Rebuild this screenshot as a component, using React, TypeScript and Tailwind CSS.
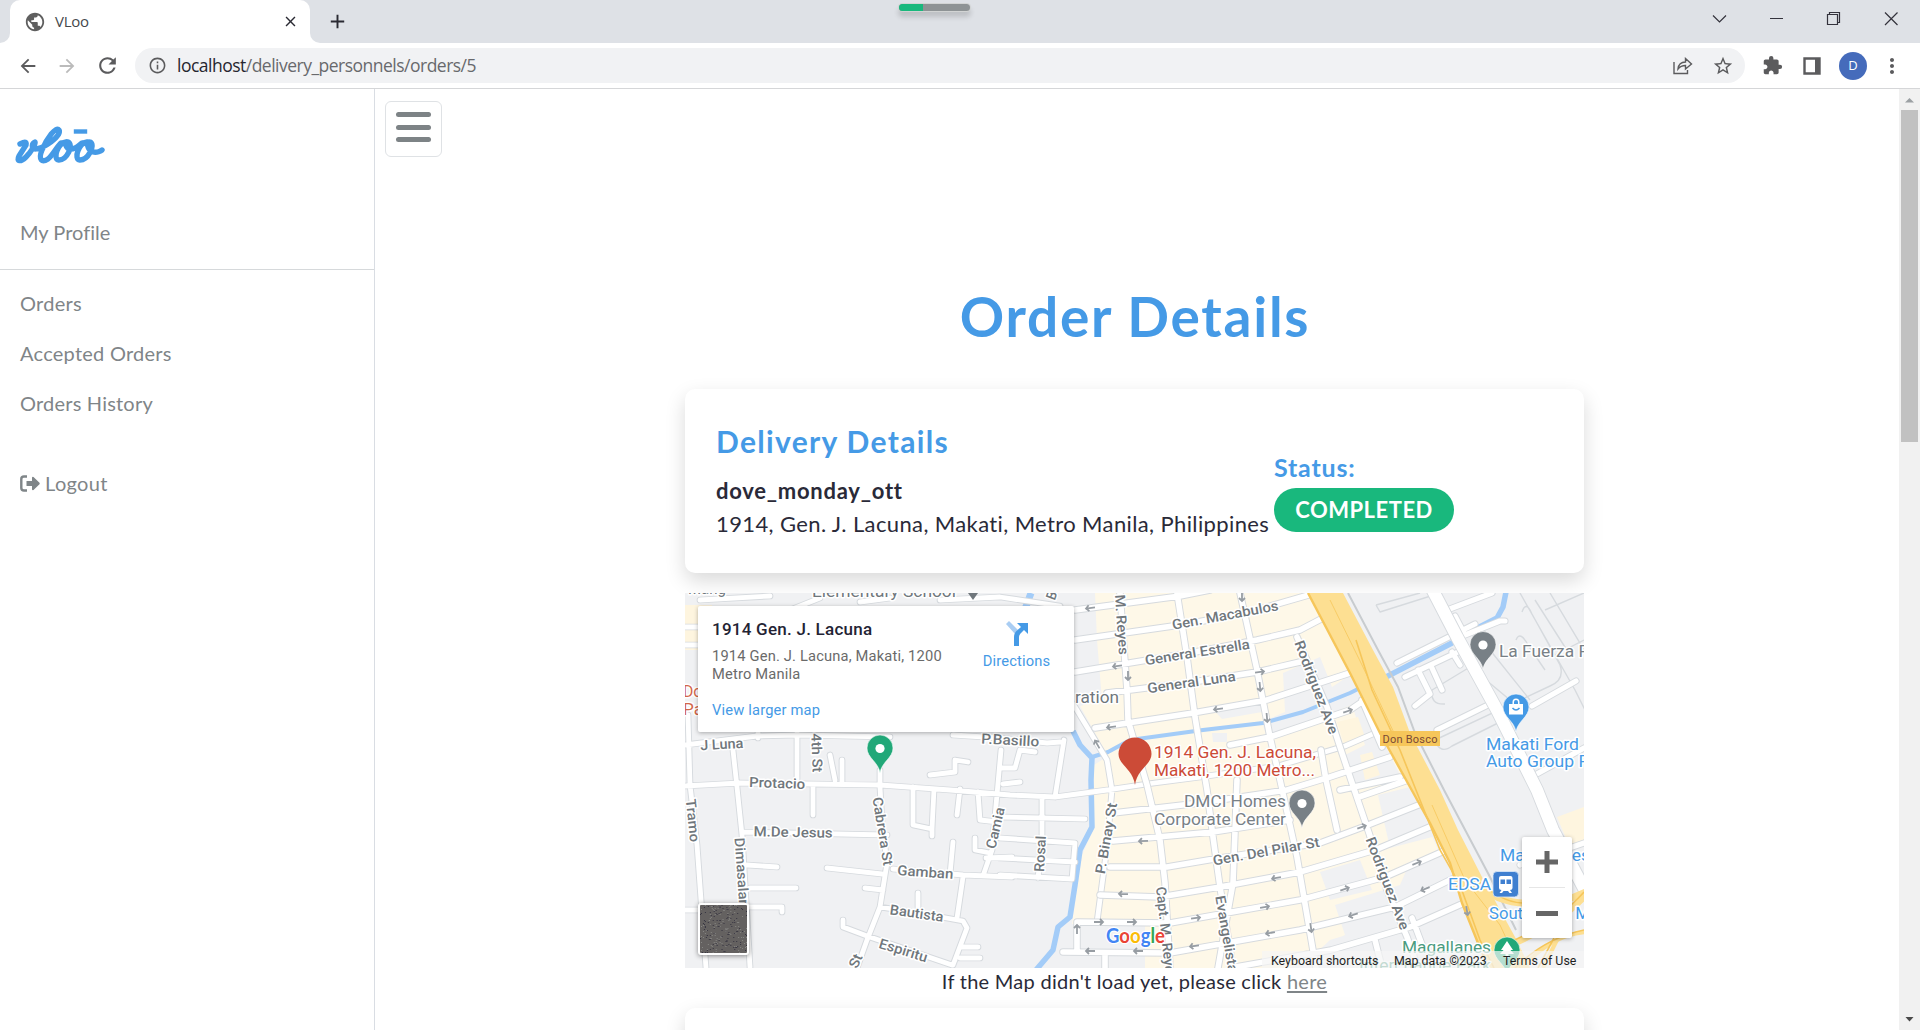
import type { ReactNode } from "react";
import {
  MdPublic, MdClose, MdAdd, MdArrowBack, MdArrowForward, MdRefresh, MdInfoOutline,
  MdStarBorder, MdExtension, MdMoreVert,
} from "react-icons/md";

const GRAY_ROADS = [
  "M685 786L740 783L810 784L880 785L950 790L1010 795L1055 797L1107 790L1147 784L1200 777L1278 766L1345 746L1382 730",
  "M685 745L757 736L800 735L890 737", "M953 735L1000 738L1047 743L1060 742", "M797 733V784",
  "M688 715L690 785L697 845L706 968", "M732 741L737 787L742 835L750 967", "M758 725V738",
  "M743 832L887 835", "M813 787V815", "M747 865L777 867", "M750 888H796", "M750 907H782V912", "M685 910H702",
  "M880 770V787L882 823L887 863L880 907L867 940L857 968", "M827 868L882 874", "M893 869L963 875L1012 877",
  "M880 907L930 915L963 921L967 928L953 965", "M963 877L957 918", "M843 920V927L867 936L952 965",
  "M865 888L883 890", "M913 787V825L932 829L934 789", "M932 829V836", "M960 789L957 815", "M978 792L980 820L998 822",
  "M1001 750L992 850L984 873", "M953 842L950 874", "M975 838V850L990 853", "M960 947H978", "M960 958H980", "M918 893V907",
  "M986 858L1012 857", "M1000 817L1085 819", "M1042 797V840L1038 878", "M1000 838L1075 843L1072 879L1000 875",
  "M1000 858L1075 862", "M1064 740L1055 797", "M830 755L835 780M842 760V782", "M930 775L955 772V760L968 762",
  "M1000 768L1015 768L1020 750L1035 752M1003 784L1020 782", "M1062 690L1075 707L1107 760L1112 790L1107 847L1097 922",
  "M700 600L770 596M790 610L820 598M860 602L890 598M940 600L1000 597L1060 606M685 627H710M685 645H710",
];
const GRID_ROADS = [
  "M1120 593L1127 690L1128 720L1147 785L1160 840L1165 883L1170 968", "M1177 593L1187 657L1195 717L1207 790L1213 837L1220 887L1233 968",
  "M1240 593L1257 670L1270 737L1280 780L1297 857L1316 968", "M1297 637L1327 707L1340 747L1351 780L1369 833L1387 890L1407 937L1418 968",
  "M1237 780L1233 883L1218 968", "M1075 610L1180 596L1210 590", "M1075 640L1187 624L1250 612L1312 594", "M1075 672L1190 653L1257 640L1300 630L1323 618",
  "M1107 693L1193 682L1257 672L1300 662", "M1095 728L1193 713L1267 700L1350 673", "M1230 745L1270 737L1350 710L1366 699",
  "M1330 777L1390 757", "M1113 813L1200 803L1287 790L1330 777", "M1113 841L1213 832L1290 820", "M1359 797L1408 780",
  "M1110 867L1167 867L1220 858L1320 843L1363 827L1421 804", "M1100 895L1160 897L1220 887L1300 872L1375 850L1432 826",
  "M1077 950V922L1170 923L1300 900L1385 877L1444 851", "M1063 952L1170 953L1300 930L1395 907L1452 879", "M1230 968L1331 950L1410 927L1464 903",
  "M1326 780L1337 830", "M1321 750L1326 780M1340 790L1400 777", "M1105 953V968", "M1362 700L1382 747", "M1375 940L1382 968M1412 918L1424 950",
];
const EAST_ROADS = [
  "M1397 663L1475 624", "M1405 677L1460 651", "M1418 670L1430 694L1415 706", "M1432 668L1442 690", "M1455 616L1465 635L1500 621H1505",
  "M1437 730L1490 704M1532 706L1576 681", "M1447 610L1492 593M1535 775L1584 748", "M1452 652L1460 665", "M1435 710M1520 865L1584 843",
];
const EAST_LINES = [
  "M1376 605L1420 593M1376 605L1380 612L1440 593", "M1520 593L1575 690L1590 720M1550 593L1590 660M1535 600L1570 655",
  "M1522 612Q1526 600 1532 614L1560 665Q1565 680 1550 686L1435 740Q1440 755 1452 746L1520 712", "M1516 640Q1520 630 1528 645L1545 670",
  "M1470 667L1432 690Q1430 705 1445 704M1480 675L1510 700M1490 650L1530 700", "M1555 655L1584 640M1545 610L1584 593",
];
const RIVERS = [
  "M1073 731L1080 745L1092 758L1091 780L1092 827L1080 850L1075 885L1070 917L1058 927L1053 950L1036 970",
  "M1092 757L1108 752L1130 740L1203 730L1263 723L1303 712L1350 693L1362 687", "M1386 677L1452 643L1462 636L1497 618L1503 607L1506 592",
  "M1031 593L1024 612",
];

const Arrow = ({ x, y, r = 0 }: { x: number; y: number; r?: number }) => (
  <path d="M-5 0H4M1 -3L4 0L1 3" transform={`translate(${x} ${y}) rotate(${r})`} stroke="#979da3" strokeWidth="1.8" fill="none" />
);
const ARROWS: [number, number, number][] = [
  [1090, 608, 172], [1117, 666, 172], [1128, 676, 90], [1218, 709, 172], [1111, 727, 172], [1097, 744, 240], [1242, 597, 90],
  [1260, 672, -8], [1260, 687, 85], [1267, 718, 85], [1348, 711, -18], [1143, 841, 178], [1123, 894, 182], [1276, 878, 170],
  [1099, 922, 0], [1132, 922, 0], [1196, 918, -8], [1265, 907, -10], [1077, 929, -90], [1090, 951, 180], [1138, 951, 180],
  [1194, 946, 172], [1270, 933, 170], [1311, 928, 82], [1362, 827, -20], [1417, 863, -22], [1345, 889, -20], [1425, 889, 158],
  [1353, 915, 162], [1467, 911, 80],
];

/* x, y is the middle of the label's baseline; w is the drawn length. */
type LabelSpec = [text: string, x: number, y: number, angle: number, w: number, size?: number];
const STREETS: LabelSpec[] = [
  ["J Luna", 722, 749, -3, 43], ["4th St", 812, 753, 88, 39], ["P.Basillo", 1010, 745, 3, 58], ["Protacio", 777, 788, 2, 56],
  ["Tramo", 688, 821, 84, 43], ["Dimasalan", 737, 873, 86, 70], ["M.De Jesus", 793, 837, 1, 79], ["Cabrera St", 878, 832, 81, 69],
  ["Gamban", 925, 877, 4, 56], ["Bautista", 916, 918, 8, 54], ["Espiritu", 902, 955, 17, 50], ["Camia", 1000, 829, -77, 42],
  ["Rosal", 1045, 854, -87, 36], ["St", 860, 963, -65, 14], ["M. Reyes", 1117, 625, 86, 60], ["Gen. Macabulos", 1226, 620, -10.5, 108],
  ["General Estrella", 1198, 657, -9, 106], ["General Luna", 1192, 687, -8, 89], ["Rodriguez Ave", 1312, 689, 69, 99], ["P. Binay St", 1111, 839, -80, 72],
  ["Gen. Del Pilar St", 1267, 856, -10, 108], ["Capt. M. Reyes", 1161, 934, 84, 94], ["Evangelista", 1222, 935, 80, 78],
  ["Rodriguez Ave", 1383, 885, 69, 98], ["B", 1056, 597, -70, 8],
];

function Label({ spec, fill = "#70777c" }: { spec: LabelSpec; fill?: string }) {
  const [text, x, y, angle, w, size = 14] = spec;
  return (
    <text transform={`translate(${x} ${y}) rotate(${angle})`} textAnchor="middle" textLength={w} lengthAdjust="spacingAndGlyphs"
      fontSize={size} fill={fill} stroke="#fff" strokeWidth="3" strokeLinejoin="round" style={{ paintOrder: "stroke" }} fontWeight="500">
      {text}
    </text>
  );
}

function Place({ lines, x, y, w, color, anchor = "start" }: { lines: string[]; x: number; y: number; w: number[]; color: string; anchor?: "start" | "end" }) {
  return (
    <>
      {lines.map((t, i) => (
        <text key={t} x={x} y={y + i * 17.5} textAnchor={anchor} textLength={w[i]} lengthAdjust="spacingAndGlyphs" fontSize="16.5" fill={color}
          stroke="#fff" strokeWidth="3" strokeLinejoin="round" style={{ paintOrder: "stroke" }}>{t}</text>
      ))}
    </>
  );
}

const Pin = ({ x, y, color, children }: { x: number; y: number; color: string; children?: ReactNode }) => (
  <g transform={`translate(${x} ${y})`}>
    <path d="M0 38C-1.500 27 -13 23 -13 13A13 13 0 0 1 13 13C13 23 1.500 27 0 38Z" fill={color} stroke="#fff" strokeOpacity=".6" strokeWidth="1" />
    {children ?? <circle cy="13.5" r="4.6" fill="#fff" />}
  </g>
);

function Roads({ d, w }: { d: string[]; w: number }) {
  const path = d.join("");
  return (
    <g fill="none" strokeLinecap="round" strokeLinejoin="round">
      <path d={path} stroke="#d6dade" strokeWidth={w + 1.9} />
      <path d={path} stroke="#fff" strokeWidth={w} />
    </g>
  );
}

function StreetMap() {
  return (
    <svg viewBox="685 593 899 375" className="block h-[375px] w-[899px]" fontFamily="Roboto, sans-serif">
      <rect x="685" y="593" width="899" height="375" fill="#f0f1f3" />
      <path d="M1095 593H1312L1350 672L1380 733L1410 787L1462 903L1395 920L1330 940L1300 968H1145V924H1072L1082 855L1094 828V765L1108 756L1080 706L1102 700L1097 640Z" fill="#fef8e8" />
      <path d="M685 605H712V650H685Z" fill="#fef5df" />
      <g fill="#f0f1f3">
        <path d="M1283 673L1320 657L1332 687L1350 675L1362 700L1290 732L1267 738L1262 722L1285 712Z" />
        <path d="M1213 709L1262 702V712L1222 719ZM1212 733H1227V742H1213Z" />
        <path d="M1352 705L1366 700L1390 755L1400 775L1355 790L1345 755L1365 745Z" />
        <path d="M1378 795L1418 785L1440 835L1390 848Z" />
        <path d="M1320 872L1360 860L1372 890L1330 900ZM1410 862L1450 850L1475 920L1400 935L1340 968H1290L1345 935L1335 905L1400 885Z" />
      </g>
      <path d="M1337 722L1358 717L1366 740L1345 747ZM1360 755L1372 752L1380 775L1365 780ZM1557 817L1584 807V845L1570 848Z" fill="#fef5df" />
      <g fill="none" stroke="#a3ccf8" strokeLinejoin="round">
        <path d={RIVERS[0]} strokeWidth="5.5" /><path d={RIVERS[1]} strokeWidth="4" />
        <path d={RIVERS[2]} strokeWidth="5.5" /><path d={RIVERS[3]} strokeWidth="7" />
      </g>
      <path d={EAST_LINES.join("")} fill="none" stroke="#d6dade" strokeWidth="1.4" strokeLinejoin="round" />
      <Roads d={GRAY_ROADS} w={4.8} />
      <Roads d={GRID_ROADS} w={5.6} />
      <Roads d={EAST_ROADS} w={5.2} />
      <Roads d={["M1430 585L1457 637L1497 710L1537 790L1553 830L1588 896"]} w={12} />
      <path d="M1348 593L1378 650L1398 687L1415 733L1444 790L1490 877L1516 930" fill="none" stroke="#c8cccf" strokeWidth="2" />
      <path d="M1308 593L1350 673L1380 733L1410 787L1430 823L1450 863L1462 903L1478 943L1489 968H1530L1515 937L1482 877L1458 830L1440 790L1410 733L1393 687L1373 650L1343 593Z" fill="#fddf92" />
      <g fill="none" stroke="#fddf92" strokeWidth="7">
        <path d="M1470 880Q1500 905 1530 903Q1560 905 1586 892" /><path d="M1500 950Q1560 925 1586 895" strokeWidth="6" /><path d="M1520 970Q1550 935 1586 932" strokeWidth="4" />
        <path d="M1543 968L1558 938" strokeWidth="4" />
      </g>
      <g fill="none" stroke="#f6c65a" strokeWidth="1.6">
        <path d="M1308 593L1350 673L1380 733L1410 787L1430 823L1450 863L1462 903L1478 943L1489 968" strokeWidth="2.4" />
        <path d="M1356 640L1372 690L1400 750L1420 800L1440 850L1460 885L1480 940L1494 968" />
        <path d="M1330 600L1362 665L1395 735M1432 805L1465 880L1500 925L1520 968" strokeWidth=".8" />
        <path d="M1475 878Q1500 902 1522 903M1498 947Q1555 925 1584 892M1515 968Q1545 938 1584 930M1538 968L1554 938" />
      </g>
      {ARROWS.map(([x, y, r]) => <Arrow key={`${x}-${y}`} x={x} y={y} r={r} />)}
      {STREETS.map((s) => <Label key={s[0] + s[1]} spec={s} />)}
      <Place lines={["Elementary School"]} x={812} y={597} w={[144]} color="#70777c" />
      <Place lines={["Mang"]} x={688} y={594} w={[38]} color="#70777c" />
      <path d="M968 593H978L973 600Z" fill="#70777c" />
      <Place lines={["Don", "Pa"]} x={683} y={697} w={[28, 20]} color="#d2664a" />
      <Place lines={["ration"]} x={1075} y={703} w={[44]} color="#70777c" />
      <Place lines={["DMCI Homes", "Corporate Center"]} x={1286} y={807} w={[102, 132]} color="#788086" anchor="end" />
      <Place lines={["La Fuerza Plaza"]} x={1499} y={657} w={[122]} color="#788086" />
      <Place lines={["Makati Ford", "Auto Group PH"]} x={1486} y={749.5} w={[93, 116]} color="#459ae6" />
      <Place lines={["1914 Gen. J. Lacuna,", "Makati, 1200 Metro..."]} x={1154} y={758} w={[162, 161]} color="#cc4b37" />
      <Pin x={880} y={735} color="#21a878" />
      <Pin x={1483} y={631.5} color="#788086" />
      <Pin x={1302} y={790} color="#788086" />
      <Pin x={1516} y={694} color="#459ae6">
        <path d="M-7 10H7V20.500H-7ZM-3.500 10V8A3.500 3.500 0 0 1 3.500 8V10H2V8A2 2 0 0 0 -2 8V10Z" fill="#fff" />
        <path d="M-3.500 14Q0 18 3.500 14" fill="none" stroke="#459ae6" strokeWidth="1.500" />
      </Pin>
      <path d="M1135 785C1133 769 1118.500 765 1118.500 754A16.500 16.500 0 0 1 1151.500 754C1151.500 765 1137 769 1135 785Z" fill="#cc4b37" />
      <rect x="1380" y="731" width="60" height="15" fill="#f6c65a" />
      <text x="1382.500" y="742.500" fontSize="11" fill="#7a4a35" textLength="55">Don Bosco</text>
      <Place lines={["Magallanes"]} x={1500} y={860.500} w={[90]} color="#459ae6" />
      <Place lines={["EDSA"]} x={1448} y={889.500} w={[43]} color="#459ae6" />
      <Place lines={["South Gate Mall"]} x={1489} y={918.500} w={[118]} color="#459ae6" />
      <rect x="1493" y="871.500" width="25.500" height="25.500" rx="4" fill="#3f7fd0" stroke="#dbe8f8" strokeWidth=".8" />
      <path d="M1501 876H1510.500Q1512.500 876 1512.500 878V888Q1512.500 890 1510 890L1512 893H1509.500L1508 891H1503.500L1502 893H1499.500L1501.500 890Q1499 890 1499 888V878Q1499 876 1501 876Z" fill="#fff" />
      <path d="M1500.500 879.500H1505V884H1500.500ZM1506.500 879.500H1511V884H1506.500Z" fill="#3f7fd0" />
      <Place lines={["Magallanes", "Interchange Park"]} x={1491} y={953} w={[89, 132]} color="#4a9c80" anchor="end" />
      <Pin x={1507} y={937} color="#21a878"><path d="M0 4L6 13H3.500L7 17H1.500V21H-1.500V17H-7L-3.500 13H-6Z" fill="#fff" /></Pin>
      <g fontSize="20.500" strokeWidth="2.500" stroke="#fff" style={{ paintOrder: "stroke" }} fontWeight="700" fontFamily="Lato, sans-serif">
        <text x="1106" y="943" textLength="59" lengthAdjust="spacingAndGlyphs">
          <tspan fill="#4285f4">G</tspan><tspan fill="#ea4335">o</tspan><tspan fill="#fbbc05">o</tspan><tspan fill="#4285f4">g</tspan><tspan fill="#34a853">l</tspan><tspan fill="#ea4335">e</tspan>
        </text>
      </g>
    </svg>
  );
}

function Satellite() {
  const specks = Array.from({ length: 230 }, (_, i) => {
    const a = Math.abs(Math.sin(i * 12.9898 + 4.1) * 43758.5453);
    const b = Math.abs(Math.sin(i * 78.233 + 1.7) * 12543.1234);
    return { x: Math.floor((a % 1) * 48), y: Math.floor((b % 1) * 48), c: i % 2 ? "#898986" : "#34323f" };
  });
  return (
    <div className="absolute bottom-[13px] left-[13px] h-[52px] w-[51px] rounded-[3px] border-2 border-white bg-[#646160] shadow-[0_1px_5px_rgba(0,0,0,0.45)]">
      <svg viewBox="0 0 48 48" className="block h-12 w-[47px]" preserveAspectRatio="none">
        {specks.map((s, i) => <rect key={i} x={s.x} y={s.y} width="1" height="1" fill={s.c} />)}
      </svg>
    </div>
  );
}

function MapPanel() {
  return (
    <section className="relative mt-5 h-[375px] w-[899px] overflow-hidden font-[Roboto,sans-serif]">
      <StreetMap />
      <div className="absolute left-[13px] top-[13px] flex h-[126px] w-[376px] justify-between rounded-xs bg-white pl-[14px] shadow-[0_1px_4px_rgba(0,0,0,0.3)]">
        <div className="pt-[11px]">
          <h3 className="text-[17px] font-medium leading-6 tracking-[0.25px] text-[#232333]">1914 Gen. J. Lacuna</h3>
          <p className="mt-[6px] w-60 text-[14.700px] leading-[18px] tracking-[0.170px] text-[#6a6a6a]">1914 Gen. J. Lacuna, Makati, 1200 Metro Manila</p>
          <a className="mt-[18px] block text-[14.700px] leading-[18px] tracking-[0.170px] text-[#459ae6]">View larger map</a>
        </div>
        <div className="flex w-[115px] flex-col items-center pt-[15px]">
          <svg viewBox="0 0 26 26" className="h-[26px] w-[26px]">
            <path d="M2 3L5 0L14 9L11 13Z" fill="#a9cdf3" />
            <path d="M10 25V16Q10 12 13 9.500L17 6L13 2H24V13L20 9L16.500 12.500Q15 14 15 16V25Z" fill="#459ae6" />
          </svg>
          <span className="mt-[5px] text-[14.700px] leading-[18px] tracking-[0.150px] text-[#459ae6]">Directions</span>
        </div>
      </div>
      <Satellite />
      <div className="absolute right-3 top-[244px] flex h-[101px] w-[50px] flex-col items-center rounded-xs bg-white shadow-[0_1px_4px_rgba(0,0,0,0.3)]">
        <svg viewBox="0 0 50 101" className="h-[101px] w-[50px]">
          <path d="M14 22.500H22.500V14H27.500V22.500H36V27.500H27.500V36H22.500V27.500H14ZM14 74H36V79H14Z" fill="#666" />
          <path d="M7 50.500H43" stroke="#e6e6e6" />
        </svg>
      </div>
      <div className="absolute bottom-0 right-0 flex h-[17px] items-center bg-[#f5f5f5]/70 pt-px text-[12.400px] leading-[17px] text-[#1f1f1f]">
        <span className="w-[123px] whitespace-nowrap pl-[9px]">Keyboard shortcuts</span>
        <span className="w-[109px] whitespace-nowrap pl-[9px]">Map data ©2023</span>
        <span className="w-[90px] whitespace-nowrap pl-[9px]">Terms of Use</span>
      </div>
    </section>
  );
}

function Browser() {
  return (
    <header className="shrink-0 font-['Open_Sans',sans-serif]">
      <div className="relative flex h-[43px] bg-[#dee1e6]">
        <div className="flex w-[10px] items-end bg-white"><div className="h-full w-full rounded-br-[10px] bg-[#dee1e6]" /></div>
        <div className="flex bg-[#dee1e6]">
          <div className="flex w-[300px] items-center rounded-t-[10px] bg-white pl-[14px] pr-[11px]">
            <MdPublic className="h-[22px] w-[22px] text-[#5f5f5f]" />
            <span className="ml-[9px] flex-1 pb-px text-[15px] tracking-[-0.250px] text-[#45484c]">VLoo</span>
            <MdClose className="h-[17px] w-[17px] text-[#2a2a33]" />
          </div>
        </div>
        <div className="w-[10px] bg-white"><div className="h-full w-full rounded-bl-[10px] bg-[#dee1e6]" /></div>
        <MdAdd className="ml-[6px] mt-[10px] h-[23px] w-[23px] text-[#2a2a33]" />
        <div className="absolute left-[898px] top-[3px] h-[9px] w-[73px] overflow-hidden rounded-full border border-white/60 bg-[#8e9395] shadow-[0_5px_5px_rgba(0,0,0,0.15)]"><div className="h-full w-[24px] bg-[#19b87d]" /></div>
        <svg className="ml-auto h-[43px] w-[220px]" viewBox="1700 0 220 43" fill="none" stroke="#33323c" strokeWidth="1.200">
          <path d="M1713 15.500L1719.500 22L1726 15.500M1770 18.500H1783M1885 12.500L1897.500 25M1897.500 12.500L1885 25" />
          <path d="M1827.500 14.500H1837.500V24.500H1827.500ZM1829.500 14V12.500H1839.500V22.500H1838" />
        </svg>
      </div>
      <div className="flex h-[46px] items-center border-b border-[#d5d6d8] bg-white text-[#5b5b5d]">
        <MdArrowBack className="ml-[17px] h-[22px] w-[22px]" />
        <MdArrowForward className="ml-[17px] h-[22px] w-[22px] text-[#bbb]" />
        <MdRefresh className="ml-[17px] h-[25px] w-[25px]" />
        <div className="ml-[15px] flex h-[35px] w-[1610px] items-center rounded-full bg-[#f1f2f4] pl-[13px] pr-[11px]">
          <MdInfoOutline className="h-[19px] w-[19px]" />
          <p className="ml-[10px] flex-1 pb-px text-[17.500px] leading-6 tracking-[-0.510px] text-[#68696c]"><span className="text-[#26262e]">localhost</span>/delivery_personnels/orders/5</p>
          <svg viewBox="0 0 20 18" className="h-[18px] w-5" fill="none" stroke="currentColor" strokeWidth="1.400">
            <path d="M1 5V16.500H14.500V13M5 12C5.500 7.500 8.500 5 12.500 5V1.500L18.500 7L12.500 12V8.500C9 8.500 7 9.500 5 12Z" />
          </svg>
          <MdStarBorder className="ml-[19px] h-[22px] w-[22px]" />
        </div>
        <MdExtension className="ml-[17px] h-[21px] w-[21px]" />
        <svg viewBox="0 0 18 18" className="ml-[20px] h-[18px] w-[18px]"><path d="M1.500 1.500H16.500V16.500H1.500Z" fill="none" stroke="currentColor" strokeWidth="2.400" /><path d="M12 1H17V17H12Z" fill="currentColor" /></svg>
        <span className="ml-[18px] flex h-7 w-7 items-center justify-center rounded-full bg-[#456bbb] text-[13px] text-white">D</span>
        <MdMoreVert className="ml-[13px] h-[24px] w-[24px]" />
      </div>
    </header>
  );
}

function Sidebar() {
  return (
    <nav className="flex w-[375px] shrink-0 flex-col border-r border-[#d9dde3] text-[20px] leading-[30px] text-[#7f8588]">
      <svg viewBox="14 122 94 46" className="ml-[13px] mt-[33px] h-[46px] w-[94px]" fill="none" stroke="#459ae6" strokeWidth="5.400" strokeLinecap="round" strokeLinejoin="round">
        <path d="M21 144C25 142 28 141 27 145L20 156C17 162 22 162 27 157C32 152 37 144 36 142C33 143 32 148 36 149C44 149 63 136 60 130C57 126 48 138 43 150C39 160 43 163 49 159C54 155 57 148 62 143" />
        <path d="M67 142C59 143 53 159 60 160C68 160 75 145 69 142C65 140 66 149 72 149C77 149 79 146 83 143" />
        <path d="M88 142C80 143 74 159 81 160C89 160 97 145 91 142C87 141 88 150 94 152C98 153 102 151 103 150" />
        <path d="M90 131.500H99" transform="translate(-13 0)" strokeWidth="4.400" strokeLinecap="square" />
      </svg>
      <a className="ml-5 mt-[49px] tracking-[0.020px]">My Profile</a>
      <hr className="mt-[22px] border-[#d6d9db]" />
      <a className="ml-5 mt-[18px] tracking-[0.250px]">Orders</a>
      <a className="ml-5 mt-5 tracking-[0.250px]">Accepted Orders</a>
      <a className="ml-5 mt-5 tracking-[0.200px]">Orders History</a>
      <a className="ml-5 mt-[50px] flex items-center tracking-[0.350px]">
        <svg viewBox="0 0 20 17" className="mr-[5px] h-[17px] w-5"><path d="M7 1.500H4Q1.300 1.500 1.300 4V13Q1.300 15.500 4 15.500H7" fill="none" stroke="currentColor" strokeWidth="2.400" /><path d="M6.500 6H12V2.500Q12.500 1.500 13.500 2L19.500 7.700Q20 8.500 19.500 9.300L13.500 15Q12.500 15.500 12 14.500V11H6.500Z" fill="currentColor" /></svg>
        Logout
      </a>
    </nav>
  );
}

export default function App() {
  return (
    <div className="flex h-[1030px] w-[1920px] flex-col overflow-hidden bg-white">
      <Browser />
      <div className="flex min-h-0 flex-1 font-[Lato,sans-serif]">
        <Sidebar />
        <main className="flex min-w-0 flex-1 flex-col overflow-hidden">
          <button className="ml-[10px] mt-3 flex h-14 w-[57px] shrink-0 flex-col gap-[7.500px] rounded-[6px] border border-[#dfe2e5] px-[10px] pt-[10px]">
            <span className="h-[5px] w-[35px] rounded-full bg-[#7d8386]" /><span className="h-[5px] w-[35px] rounded-full bg-[#7d8386]" /><span className="h-[5px] w-[35px] rounded-full bg-[#7d8386]" />
          </button>
          <div className="ml-[310px] flex w-[899px] flex-col">
            <h1 className="mt-[123px] pl-px text-center text-[55px] font-bold leading-[72px] tracking-[1.750px] text-[#459ae6]">Order Details</h1>
            <section className="mt-[37px] flex h-[184px] rounded-[10px] bg-white pl-[31px] shadow-[0_8px_20px_rgba(0,0,0,0.15)]">
              <div className="w-[558px] whitespace-nowrap text-[22px] leading-[33px] text-[#2a2a38]">
                <h2 className="mt-[32px] text-[30px] font-bold leading-[40px] tracking-[1.320px] text-[#459ae6]">Delivery Details</h2>
                <p className="mt-[13px] font-bold tracking-[0.750px]">dove_monday_ott</p>
                <p className="tracking-[0.380px]">1914, Gen. J. Lacuna, Makati, Metro Manila, Philippines</p>
              </div>
              <div className="pt-[61px]">
                <h3 className="text-[25px] font-bold leading-[34px] tracking-[0.800px] text-[#459ae6]">Status:</h3>
                <span className="mt-1 flex h-11 w-[180px] items-center justify-center rounded-full bg-[#19b87d] pb-[2px] text-[22px] font-bold tracking-[0.500px] text-white">COMPLETED</span>
              </div>
            </section>
            <MapPanel />
            <p className="-mt-[2px] text-center text-[20px] leading-[30px] tracking-[0.270px] text-[#2a2a38]">If the Map didn't load yet, please click <a className="text-[#7f8588] underline underline-offset-2">here</a></p>
            <section className="mt-3 h-40 rounded-[10px] bg-white shadow-[0_8px_20px_rgba(0,0,0,0.15)]" />
          </div>
        </main>
        <div className="flex w-[21px] shrink-0 flex-col items-center bg-[#f1f1f1]">
          <svg viewBox="0 0 21 21" className="h-[21px] w-[21px] shrink-0"><path d="M6 13.500L10.500 9L15 13.500Z" fill="#9ba0a3" /></svg>
          <div className="h-[332px] w-[17px] shrink-0 bg-[#c1c1c1]" />
          <svg viewBox="0 0 21 21" className="mt-auto h-[21px] w-[21px]"><path d="M6.500 8L10.500 12.500L14.500 8Z" fill="#4a4a4a" /></svg>
        </div>
      </div>
    </div>
  );
}
